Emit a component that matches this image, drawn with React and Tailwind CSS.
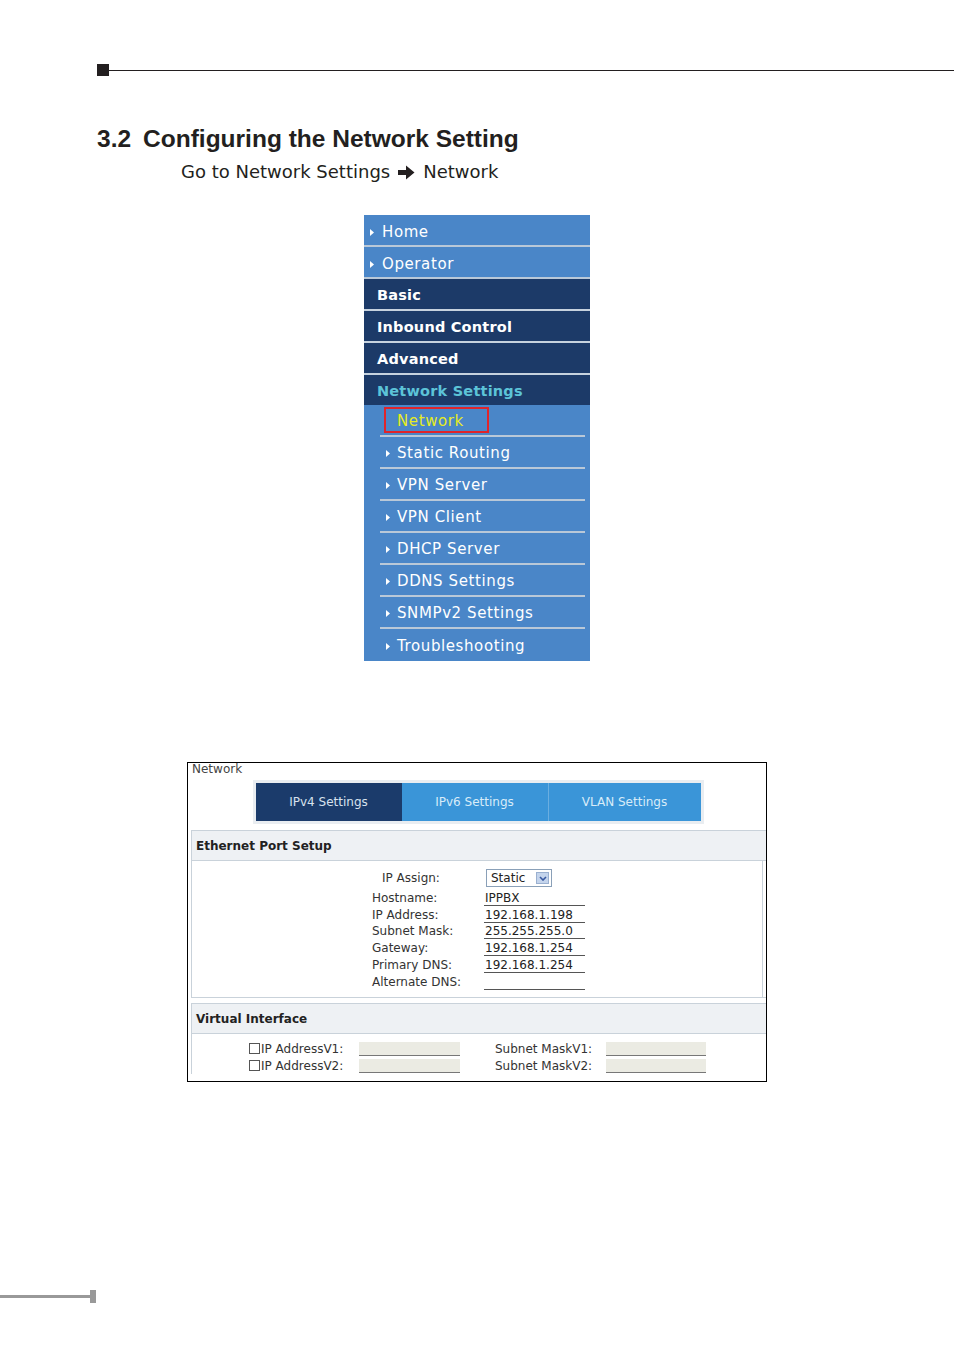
const menuTop = [
  { label: "Home", arrow: true },
  { label: "Operator", arrow: true },
];
const menuBold = ["Basic", "Inbound Control", "Advanced"];
const subItems = [
  "Static Routing",
  "VPN Server",
  "VPN Client",
  "DHCP Server",
  "DDNS Settings",
  "SNMPv2 Settings",
  "Troubleshooting",
];
const fields = [
  ["Hostname:", "IPPBX"],
  ["IP Address:", "192.168.1.198"],
  ["Subnet Mask:", "255.255.255.0"],
  ["Gateway:", "192.168.1.254"],
  ["Primary DNS:", "192.168.1.254"],
  ["Alternate DNS:", ""],
];

function Tri({ className = "" }) {
  return (
    <svg width="4" height="7" viewBox="0 0 4 7" className={className}>
      <path d="M0 0 L4 3.5 L0 7 Z" fill="#fff" />
    </svg>
  );
}

function Sidebar() {
  return (
    <div className="w-[226px] bg-[#4a86c8] font-['DejaVu_Sans',sans-serif]">
      {menuTop.map((m) => (
        <div key={m.label} className="h-[32px] pt-[4px] flex items-center border-b-2 border-[#b9c8d8] bg-[#4a86c8] text-white text-[15px] tracking-[0.6px]">
          <Tri className="ml-[6px] mr-[8px]" />
          {m.label}
        </div>
      ))}
      {menuBold.map((m) => (
        <div key={m} className="h-[32px] pt-[4px] flex items-center border-b-2 border-[#c6d2de] bg-[#1c3a68] text-white text-[14.5px] font-bold tracking-[0.2px] pl-[13px]">
          {m}
        </div>
      ))}
      <div className="h-[30px] pt-[4px] flex items-center bg-[#1c3a68] text-[#5cc4d8] text-[14.5px] font-bold tracking-[0.2px] pl-[13px]">
        Network Settings
      </div>
      <div className="pl-[16px] pr-[5px]">
        <div className="h-[32px] flex items-center border-b-2 border-[#b9c8d8]">
          <div className="ml-[4px] h-[26px] w-[105px] border-2 border-[#e0242a] flex items-center pl-[11px] pt-[2px] text-[#e6ec22] text-[15px] tracking-[0.6px]">
            Network
          </div>
        </div>
        {subItems.map((s, i) => (
          <div
            key={s}
            className={`h-[32px] pt-[3px] flex items-center text-white text-[15px] tracking-[0.6px] ${i < subItems.length - 1 ? "border-b-2 border-[#b9c8d8]" : ""}`}
          >
            <Tri className="ml-[6px] mr-[7px]" />
            {s}
          </div>
        ))}
      </div>
    </div>
  );
}

function NetworkPanel() {
  return (
    <div className="w-[580px] h-[320px] border border-black bg-white font-['DejaVu_Sans',sans-serif] text-[12px] text-[#333]">
      <div className="pl-[4px] leading-[12px] h-[14px] text-[#444]">Network</div>
      <div className="flex justify-center">
        <div className="ml-[2px] mt-[3px] bg-[#e9edf1] p-[3px] flex">
          <div className="w-[146px] h-[38px] bg-[#1b3b6b] text-[#d8e2ee] flex items-center justify-center">IPv4 Settings</div>
          <div className="w-[147px] h-[38px] bg-[#3a95d8] text-[#d8ecf8] flex items-center justify-center border-r border-[#6aaee0]">IPv6 Settings</div>
          <div className="w-[152px] h-[38px] bg-[#3a95d8] text-[#d8ecf8] flex items-center justify-center">VLAN Settings</div>
        </div>
      </div>
      <div className="ml-[3px] mt-[6px] border-l border-y border-[#c9d2da]">
        <div className="h-[30px] bg-[#eef1f4] border-b border-[#c9d2da] flex items-center pl-[4px] font-bold text-[#222]">
          Ethernet Port Setup
        </div>
        <div className="h-[136px] pt-[7px] pl-[180px] border-r border-[#c9d2da] mr-[3px]">
          <div className="flex items-center h-[20px] mb-[1px]">
            <div className="w-[112px] pl-[10px]">IP Assign:</div>
            <div className="ml-[2px] w-[66px] h-[18px] border border-[#8aa0b8] bg-white flex items-center pl-[4px] text-[#222]">
              Static
              <div className="ml-auto mr-[2px] w-[13px] h-[12px] bg-[#c4d4ec] border border-[#9ab0d0] flex items-center justify-center">
                <svg width="8" height="5" viewBox="0 0 8 5"><path d="M1 1 L4 4 L7 1" stroke="#3858a0" strokeWidth="1.6" fill="none" /></svg>
              </div>
            </div>
          </div>
          {fields.map(([l, v]) => (
            <div key={l} className="flex items-end h-[16.8px]">
              <div className="w-[112px] leading-[15px]">{l}</div>
              <div className="w-[101px] border-b border-[#555] leading-[14px] pl-[1px] text-[#222]">{v || "\u00a0"}</div>
            </div>
          ))}
        </div>
      </div>
      <div className="ml-[3px] mt-[5px] border-t border-l border-[#c9d2da]">
        <div className="h-[30px] bg-[#eef1f4] border-b border-[#c9d2da] flex items-center pl-[4px] font-bold text-[#222]">
          Virtual Interface
        </div>
        <div className="pt-[6px] pl-[57px]">
          {["1", "2"].map((n) => (
            <div key={n} className="flex items-center h-[17px]">
              <div className="w-[11px] h-[11px] border border-[#555] bg-white" />
              <div className="w-[99px] pl-[1px]">IP AddressV{n}:</div>
              <div className="w-[101px] h-[14px] bg-[#ebebe3] border-b border-[#777]" />
              <div className="ml-[35px] w-[111px]">Subnet MaskV{n}:</div>
              <div className="w-[100px] h-[14px] bg-[#ebebe3] border-b border-[#777]" />
            </div>
          ))}
        </div>
      </div>
    </div>
  );
}

export default function App() {
  return (
    <div className="w-[954px] h-[1354px] bg-white relative overflow-hidden">
      <div className="pt-[64px] flex items-center">
        <div className="ml-[97px] w-[12px] h-[12px] bg-[#231f20]" />
        <div className="flex-1 h-[1px] bg-[#231f20]" />
      </div>
      <h1 className="mt-[49px] ml-[97px] font-['Liberation_Sans',Arial,sans-serif] font-bold text-[24.5px] leading-[28px] text-[#231f20]">
        3.2<span className="ml-[12px]">Configuring the Network Setting</span>
      </h1>
      <div className="mt-[7px] ml-[181px] flex items-center font-['DejaVu_Sans',sans-serif] text-[18px] leading-[24px] text-[#231f20]">
        Go to Network Settings
        <svg width="17" height="15" viewBox="0 0 17 15" className="mx-[8px]">
          <path d="M0 5 H8 V0.5 L16.5 7.5 L8 14.5 V10 H0 Z" fill="#231f20" />
        </svg>
        Network
      </div>
      <div className="mt-[31px] ml-[364px]">
        <Sidebar />
      </div>
      <div className="mt-[101px] ml-[187px]">
        <NetworkPanel />
      </div>
      <div className="absolute left-0 top-[1290px] flex items-center">
        <div className="w-[90px] h-[3px] bg-[#999]" />
        <div className="w-[6px] h-[13px] bg-[#999]" />
      </div>
    </div>
  );
}
